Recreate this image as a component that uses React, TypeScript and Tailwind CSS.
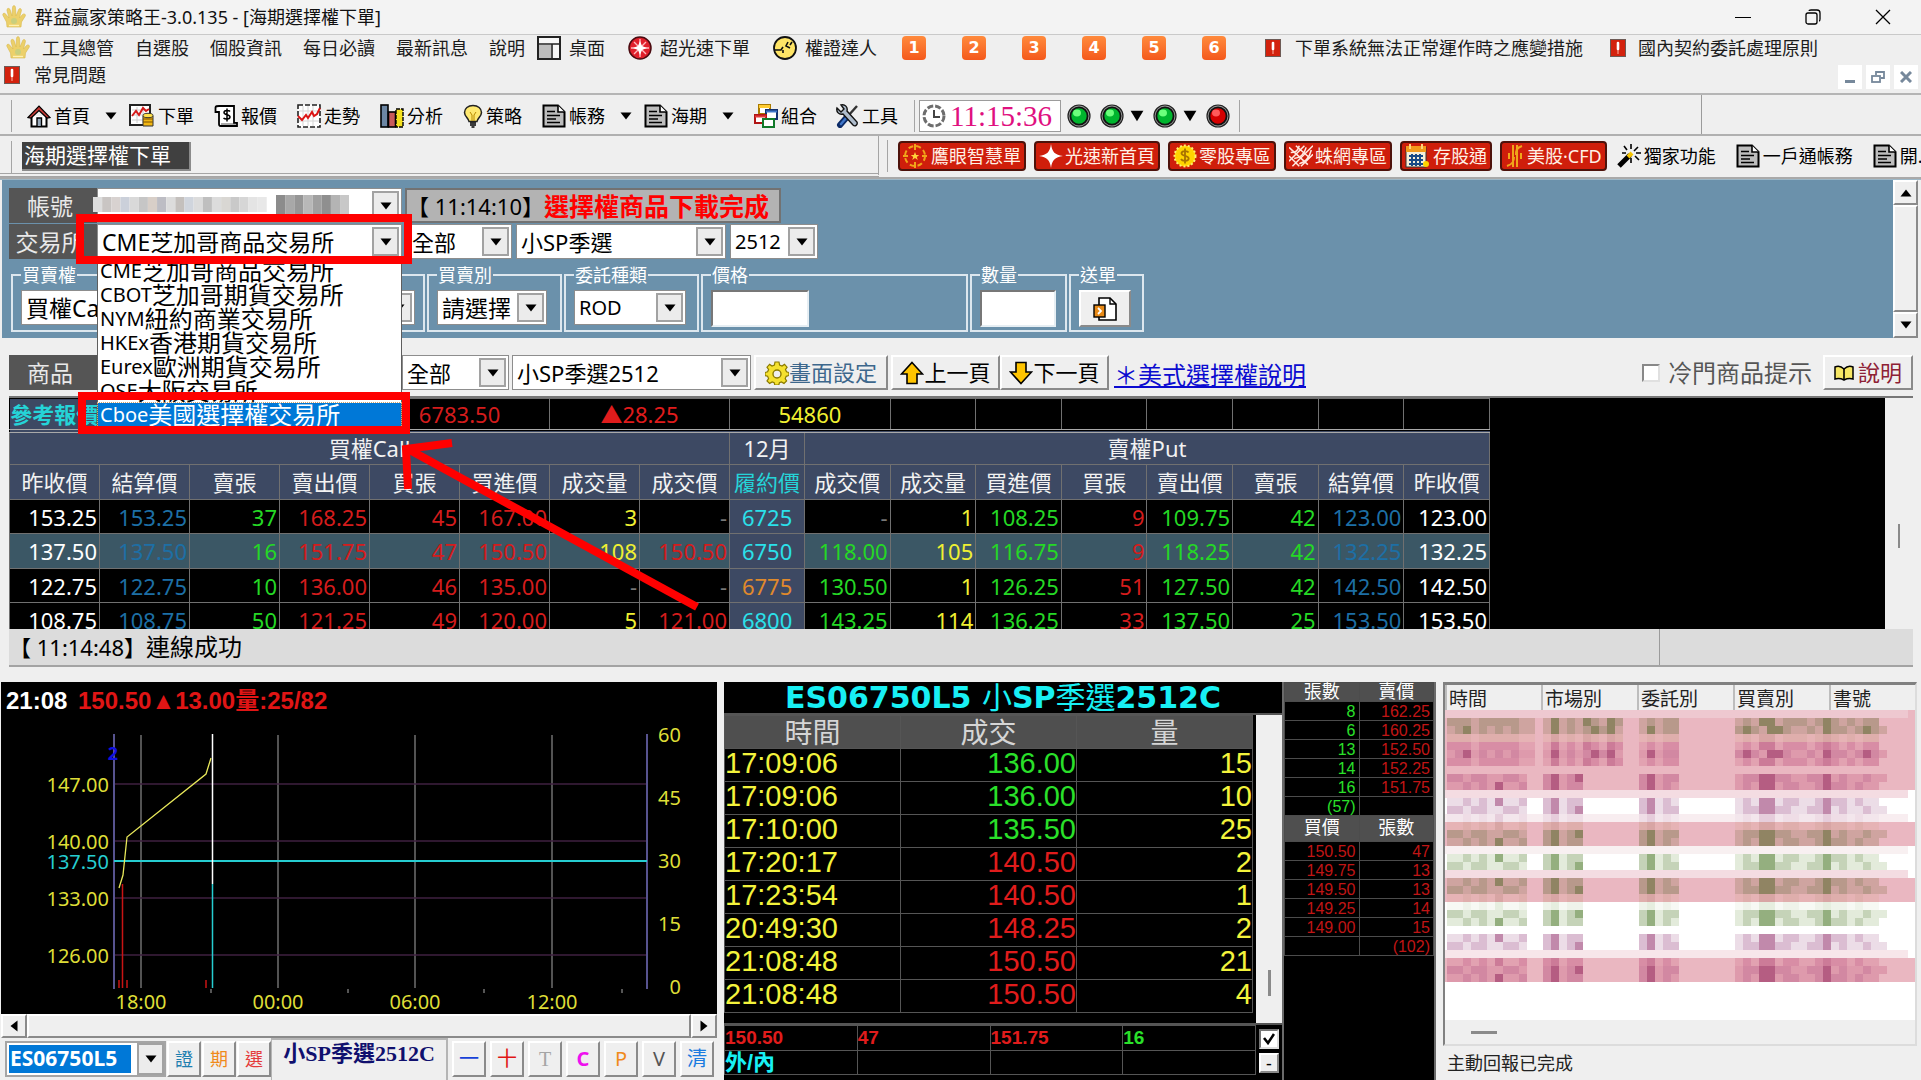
import { useState } from "react";
import type { ReactNode } from "react";

const exchanges = [
  { code: "CME", name: "芝加哥商品交易所" },
  { code: "CBOT", name: "芝加哥期貨交易所" },
  { code: "NYM", name: "紐約商業交易所" },
  { code: "HKEx", name: "香港期貨交易所" },
  { code: "Eurex", name: "歐洲期貨交易所" },
  { code: "OSE", name: "大阪交易所" },
  { code: "Cboe", name: "美國選擇權交易所" },
];

const callHeads = ["昨收價", "結算價", "賣張", "賣出價", "買張", "買進價", "成交量", "成交價"];
const putHeads = ["成交價", "成交量", "買進價", "買張", "賣出價", "賣張", "結算價", "昨收價"];

const callColors = [
  "text-white",
  "text-[#1d6fa5]",
  "text-[#25d825]",
  "text-[#d41c1c]",
  "text-[#d41c1c]",
  "text-[#d41c1c]",
  "text-[#f0f032]",
  "text-[#d41c1c]",
];
const putColors = [
  "text-[#25d825]",
  "text-[#f0f032]",
  "text-[#25d825]",
  "text-[#d41c1c]",
  "text-[#25d825]",
  "text-[#25d825]",
  "text-[#1d6fa5]",
  "text-white",
];

const quotes = [
  {
    strike: "6725",
    call: ["153.25", "153.25", "37", "168.25", "45", "167.00", "3", "-"],
    put: ["-", "1", "108.25", "9", "109.75", "42", "123.00", "123.00"],
  },
  {
    strike: "6750",
    active: true,
    call: ["137.50", "137.50", "16", "151.75", "47", "150.50", "108", "150.50"],
    put: ["118.00", "105", "116.75", "9", "118.25", "42", "132.25", "132.25"],
  },
  {
    strike: "6775",
    atm: true,
    call: ["122.75", "122.75", "10", "136.00", "46", "135.00", "-", "-"],
    put: ["130.50", "1", "126.25", "51", "127.50", "42", "142.50", "142.50"],
  },
  {
    strike: "6800",
    call: ["108.75", "108.75", "50", "121.25", "49", "120.00", "5", "121.00"],
    put: ["143.25", "114", "136.25", "33", "137.50", "25", "153.50", "153.50"],
  },
];

const trades = [
  { time: "17:09:06", price: "136.00", qty: "15" },
  { time: "17:09:06", price: "136.00", qty: "10" },
  { time: "17:10:00", price: "135.50", qty: "25" },
  { time: "17:20:17", price: "140.50", qty: "2", up: true },
  { time: "17:23:54", price: "140.50", qty: "1", up: true },
  { time: "20:49:30", price: "148.25", qty: "2", up: true },
  { time: "21:08:48", price: "150.50", qty: "21", up: true },
  { time: "21:08:48", price: "150.50", qty: "4", up: true },
];

const asks = [
  ["8", "162.25"],
  ["6", "160.25"],
  ["13", "152.50"],
  ["14", "152.25"],
  ["16", "151.75"],
  ["(57)", ""],
];
const bids = [
  ["150.50", "47"],
  ["149.75", "13"],
  ["149.50", "13"],
  ["149.25", "14"],
  ["149.00", "15"],
  ["", "(102)"],
];

/* Masked order rows: one character per 8px cell, 1-3 pick a shade of the band's palette */
const narrowA = "1121213112..23122.......23121.......1213312211232212110";
const narrowB = "2212211221..23123.......23122.......1223322112231211211";
const wideA = "22212222211.1312132132..12122.......1213312221232121220";
const wideB = "12312121211.1312123231..13122.......2321332112132212321";
const brown = ["#cfa4a0", "#b8998b", "#908463"];
const magenta = ["#de9aac", "#d288a2", "#b55d82"];
const mauve = ["#ecdde7", "#dbbdd2", "#c189ab"];
const green = ["#e3ebdb", "#c5d3b8", "#94af7f"];
const faint = ["#f7f9f4", "#eff3ea", "#e6eedf"];
const blush = ["#e6b3b5", "#dfaeac", "#d8a5a4"];

const mosaic: { row: number; cells: string; shades: string[] }[] = [
  { row: 1, cells: wideA, shades: brown },
  { row: 2, cells: wideB, shades: brown },
  { row: 3, cells: wideA, shades: blush },
  { row: 4, cells: wideA, shades: ["#e2a2b1", "#d88da5", "#cc7b98"] },
  { row: 5, cells: wideB, shades: magenta },
  { row: 6, cells: wideA, shades: ["#e2a2b1", "#d88da5", "#cc7b98"] },
  { row: 8, cells: narrowB, shades: magenta },
  { row: 9, cells: narrowA, shades: magenta },
  { row: 11, cells: narrowA, shades: mauve },
  { row: 12, cells: narrowB, shades: mauve },
  { row: 13, cells: narrowA, shades: ["#f3e6ec", "#efdde6", "#e6cddb"] },
  { row: 14, cells: narrowA, shades: blush },
  { row: 15, cells: narrowB, shades: brown },
  { row: 16, cells: narrowA, shades: brown },
  { row: 18, cells: narrowA, shades: green },
  { row: 19, cells: narrowB, shades: green },
  { row: 21, cells: narrowA, shades: brown },
  { row: 22, cells: narrowB, shades: brown },
  { row: 23, cells: narrowA, shades: blush },
  { row: 24, cells: narrowA, shades: faint },
  { row: 25, cells: narrowB, shades: green },
  { row: 26, cells: narrowA, shades: green },
  { row: 28, cells: narrowA, shades: mauve },
  { row: 29, cells: narrowB, shades: mauve },
  { row: 31, cells: narrowA, shades: ["#e2a2b1", "#d88da5", "#cc7b98"] },
  { row: 32, cells: narrowB, shades: magenta },
  { row: 33, cells: narrowA, shades: magenta },
];

const pinkBands = [
  [0, 10],
  [14, 3],
  [21, 3],
  [31, 3],
];
const paleBands: [number, string][] = [
  [0, "#eec8d0"],
  [10, "#f4dce2"],
  [13, "#f8edf0"],
  [17, "#f8f0f1"],
  [20, "#f4dce2"],
  [30, "#f7e6ea"],
];

const accountMask =
  "#ddd #c9c5c3 #d8d2d0 #cbd0da #d9d9d9 #c6c6c6 #d8cfc8 #bdbdc4 #dcdcdc #c4c0bd #d0d5dd #dcdcdc #bfbfbf #dcdcdc #d9d7d3 #c9c9c9 #d6d6d6 #e4e4e4 #e8e8e8 #fff #8c8c8c #a8a8a8 #969696 #b8b8b8 #a0a0a0 #8f8f8f #b4b4b4 #c8c8c8".split(" ");

/* ---------- icons ---------- */

function Crown() {
  return (
    <svg className="h-6 w-6 shrink-0" viewBox="0 0 24 24">
      <path
        d="M5 22L4.500 17L1 10.500C0 8 3 7.500 4 9.500L7 13L5 5.500C4.500 3 7.500 2.500 8.200 5L10 11L10.500 2.500C10.600 0 13.400 0 13.500 2.500L14 11L16.500 5C17.300 2.500 20 3.500 19.300 6L17.500 13L20.500 9.500C22 8 24.500 9.500 23 11.500L19.500 17L19 22Z"
        fill="#ecd06a"
        stroke="#d9b84d"
        strokeWidth="0.6"
      />
      <circle cx="12" cy="16" r="3" fill="#c9cf7d" />
      <path d="M7 20.500H17" stroke="#fff1b0" strokeWidth="1.400" />
    </svg>
  );
}

function Bang() {
  return (
    <svg className="h-[18px] w-4 shrink-0" viewBox="0 0 16 18">
      <rect x="0.5" y="0.5" width="15" height="17" fill="#d3220d" stroke="#6d5a55" />
      <path d="M8 4v6" stroke="#fff" strokeWidth="2.600" strokeLinecap="round" />
      <path d="M8 11v4" stroke="#ffb4a6" strokeWidth="1" />
    </svg>
  );
}

function NumberTile({ n }: { n: number }) {
  return (
    <button className="h-6 w-6 rounded-sm bg-linear-to-b from-[#ff8a3c] to-[#f4581b] text-center font-['DejaVu_Sans',sans-serif] text-base leading-6 font-bold text-white">
      {n}
    </button>
  );
}

function DocIcon() {
  return (
    <svg className="h-6 w-6 shrink-0" viewBox="0 0 24 24">
      <path d="M1.500 1.500H16L22.500 8V22.500H1.500Z" fill="#bdbdbd" stroke="#000" strokeWidth="2" />
      <path d="M16 1.500V8h6.500" fill="#fff" stroke="#000" strokeWidth="1.600" />
      <path d="M5 7.500h8M5 11.500h13M5 15h9M5 18.500h13" stroke="#000" strokeWidth="1.600" />
    </svg>
  );
}

function Led({ red }: { red?: boolean }) {
  return (
    <svg className="h-6 w-6 shrink-0" viewBox="0 0 24 24">
      <circle cx="12" cy="12" r="11" fill="#9a9a9a" stroke="#222" strokeWidth="1.200" />
      <circle cx="12" cy="12" r="8.600" fill={red ? "#d40000" : "#00b52e"} stroke="#111" strokeWidth="1.800" />
      <ellipse cx="10" cy="9" rx="4" ry="3.400" fill={red ? "#ff5a5a" : "#6cff7c"} />
    </svg>
  );
}

function Down({ big }: { big?: boolean }) {
  return (
    <svg className={big ? "h-3 w-3.5 shrink-0" : "h-2 w-3 shrink-0"} viewBox="0 0 12 8" preserveAspectRatio="none">
      <path d="M0.500 0.500H11.500L6 7.500Z" fill="#000" />
    </svg>
  );
}

function ToolItem({ icon, label, more }: { icon: ReactNode; label: string; more?: boolean }) {
  return (
    <button className="flex shrink-0 items-center gap-[3px] text-lg whitespace-nowrap text-black">
      {icon}
      {label}
      {more && (
        <span className="ml-3">
          <Down />
        </span>
      )}
    </button>
  );
}

const homeIcon = (
  <svg className="h-6 w-6" viewBox="0 0 24 24">
    <path d="M4.500 12v10.500h15V12" fill="#fff" stroke="#000" strokeWidth="2" />
    <path d="M10 22v-8h4.500v8" fill="#9ab" stroke="#000" strokeWidth="1.400" />
    <path d="M1 13.500 L12 2 L23 13.500 L20 14 L12 6.500 L4 14Z" fill="#c63a35" stroke="#000" strokeWidth="1.200" />
  </svg>
);
const orderIcon = (
  <svg className="h-6 w-[26px]" viewBox="0 0 26 24">
    <rect x="1" y="1" width="20" height="20" fill="#fff" stroke="#222" strokeWidth="2" />
    <path d="M3 6h16M3 11h16M3 16h16M8 3v16M14 3v16" stroke="#ccc" />
    <path d="M3 12l4-5 3 4 4-7 3 3 3-2" fill="none" stroke="#d51b1b" strokeWidth="2" />
    <path d="M14 12h10v10h-10z" fill="#f2b714" stroke="#333" />
    <path d="M14 15h10M14 18h10" stroke="#7a5200" strokeWidth="1.200" />
    <ellipse cx="19" cy="11.500" rx="5" ry="2.200" fill="#ffe14a" stroke="#333" />
  </svg>
);
const quoteIcon = (
  <svg className="h-6 w-6" viewBox="0 0 24 24">
    <path d="M5 2h15v17h3v3H7c-2 0-2-1-2-3V8H1.500V3.500C1.500 2 3 2 5 2z" fill="#fff" stroke="#000" strokeWidth="1.800" />
    <path d="M16 7.500c-1-1.500-6-1.500-6 1 0 3 6 1.500 6 4.500 0 2.500-5 2.500-6.500 1M13 4.500v13" fill="none" stroke="#000" strokeWidth="1.500" />
    <path d="M7 20h15" stroke="#555" />
  </svg>
);
const trendIcon = (
  <svg className="h-6 w-6" viewBox="0 0 24 24">
    <rect x="1" y="1" width="22" height="22" fill="#fff" stroke="#222" strokeWidth="1.600" strokeDasharray="5 2" />
    <path d="M6 2v20M11 2v20M16 2v20M2 7h20M2 17h20" stroke="#d5d5d5" />
    <path d="M1 12l4 4 4-5 2 3 4-6 2 4 3-2 3-6" fill="none" stroke="#dc1414" strokeWidth="2" />
  </svg>
);
const analysisIcon = (
  <svg className="h-6 w-6" viewBox="0 0 24 24">
    <rect x="1" y="1" width="7" height="22" fill="#6c86a3" stroke="#000" strokeWidth="1.600" />
    <rect x="8.500" y="8" width="7" height="15" fill="#c85b5b" stroke="#000" strokeWidth="1.600" />
    <rect x="16" y="5" width="7" height="18" fill="#f4e01f" stroke="#000" strokeWidth="1.400" strokeDasharray="4 1" />
  </svg>
);
const bulbIcon = (
  <svg className="h-6 w-5" viewBox="0 0 20 24">
    <path d="M10 1.500c-5 0-8.500 3-8.500 7 0 4 4 5.500 4.500 9h8c.5-3.500 4.500-5 4.500-9 0-4-3.500-7-8.500-7z" fill="#ffe970" stroke="#222" strokeWidth="1.500" />
    <path d="M7 8l2 3v6M13 8l-2 3v6" fill="none" stroke="#b88a00" />
    <path d="M7 19h6M7 21h6M8.500 23h3" stroke="#000" strokeWidth="1.600" />
  </svg>
);
const comboIcon = (
  <svg className="h-6 w-6" viewBox="0 0 24 24">
    <rect x="5" y="1" width="11" height="9" fill="#fff" stroke="#a97a00" strokeWidth="2" />
    <path d="M5 2.500h11" stroke="#ffcc33" strokeWidth="3" />
    <rect x="12" y="6" width="11" height="9" fill="#fff" stroke="#12306f" strokeWidth="2" />
    <path d="M12 7.500h11" stroke="#3f76c9" strokeWidth="2" />
    <rect x="1" y="11" width="11" height="8" fill="#fff" stroke="#b01515" strokeWidth="2" />
    <path d="M1 12.500h11" stroke="#e53b3b" strokeWidth="2" />
    <rect x="9" y="15" width="11" height="8" fill="#fff" stroke="#127a2a" strokeWidth="2" />
  </svg>
);
const toolsIcon = (
  <svg className="h-6 w-6" viewBox="0 0 24 24">
    <path d="M22 2L13 12" stroke="#333" strokeWidth="2.400" />
    <path d="M12 13L5 21" stroke="#0b2a66" strokeWidth="6" strokeLinecap="round" />
    <path d="M11.500 13.500L6 20" stroke="#3f76c9" strokeWidth="2.500" strokeLinecap="round" />
    <path d="M2 4l4 4 3-3-3-4c4-1 7 2 6 6l10 11c1 3-2 5-4 3L8 10C4 11 1 8 2 4z" fill="#aebccb" stroke="#111" strokeWidth="1.400" />
  </svg>
);
const wandIcon = (
  <svg className="h-6 w-6" viewBox="0 0 24 24">
    <path d="M2 22L13 11" stroke="#000" strokeWidth="5" />
    <path d="M11 13l4-4" stroke="#f5c400" strokeWidth="4" />
    <path d="M14 0v5M7 2l3 4M21 3l-4 4M24 9h-5M18 12l4 4M14 14v5M5 9h4" stroke="#000" strokeWidth="1.600" />
  </svg>
);

const promos = [
  {
    label: "鷹眼智慧單",
    icon: (
      <svg className="mr-0.5 h-6 w-6" viewBox="0 0 24 24" fill="none" stroke="#f0a51a" strokeWidth="2">
        <circle cx="12" cy="12" r="10" strokeDasharray="5 3" />
        <path d="M12 0v6M12 18v6M0 12h5M19 12h5" />
        <path d="M12 8l1.200 3h3l-2.400 2 1 3-2.800-2-2.800 2 1-3-2.400-2h3z" fill="#ffd23a" stroke="none" />
      </svg>
    ),
  },
  {
    label: "光速新首頁",
    icon: (
      <svg className="h-6 w-6" viewBox="0 0 24 24">
        <path d="M12 0c1 8 4 11 12 12-8 1-11 4-12 12C11 16 8 13 0 12 8 11 11 8 12 0z" fill="#fff" />
      </svg>
    ),
  },
  {
    label: "零股專區",
    icon: (
      <svg className="h-6 w-6" viewBox="0 0 24 24">
        <circle cx="12" cy="12" r="10.500" fill="#ffd400" stroke="#ffee70" strokeDasharray="2 2" strokeWidth="2" />
        <path d="M15.500 8.500c-1-2-7-2-7 .8 0 3.200 7.200 2 7.200 5.200 0 3-6.500 3-7.700.5M12 4.500v15" fill="none" stroke="#a87200" strokeWidth="1.800" />
      </svg>
    ),
  },
  {
    label: "蛛網專區",
    icon: (
      <svg className="h-6 w-6" viewBox="0 0 28 24" fill="none" stroke="#ffe9e0" strokeWidth="1.800">
        <path d="M0 2l22 20M0 12l12 12M8 0l16 14M28 0L4 24M18 0L0 18M28 10L14 24" />
        <path d="M2 8c6 0 8-2 10-8M6 15c8-1 12-5 14-13M12 21c8-2 12-8 14-16" />
      </svg>
    ),
  },
  {
    label: "存股通",
    icon: (
      <svg className="mr-0.5 h-6 w-6" viewBox="0 0 24 24">
        <rect x="1" y="3" width="20" height="20" fill="#f7efd8" stroke="#333" />
        <rect x="1" y="2" width="20" height="6" fill="#f39a1c" />
        <path d="M5 0v5M17 0v5" stroke="#ffd27a" strokeWidth="2" />
        <path d="M4 12h14M4 16h14M4 20h14M7 10v12M11 10v12M15 10v12" stroke="#1a4b86" strokeWidth="2" />
        <circle cx="21" cy="20" r="3" fill="#ffd400" />
      </svg>
    ),
  },
  {
    label: "美股·CFD",
    icon: (
      <svg className="h-6 w-5" viewBox="0 0 20 24" fill="none" stroke="#f0a51a" strokeWidth="2">
        <path d="M8 1v22M12 1v22M17 2c-6 2-6 5-6 9M9 13c0 4-1 7-7 9M4 9v6M16 9v6" />
      </svg>
    ),
  },
];

/* ---------- form parts ---------- */

type ComboProps = {
  label: string;
  value: string;
  options?: string[];
  width: string;
  size?: string;
  children?: ReactNode;
};

function Combo({ label, value, options, width, size = "text-[22px]", children }: ComboProps) {
  return (
    <div className={`relative h-[35px] shrink-0 border border-[#8d8d8d] bg-white ${width}`}>
      <select
        aria-label={label}
        defaultValue={value}
        className={`h-full w-full appearance-none bg-transparent pl-1 leading-8 text-black outline-none ${size}`}
      >
        {(options ?? [value]).map((o) => (
          <option key={o}>{o}</option>
        ))}
      </select>
      <span className="pointer-events-none absolute inset-y-0.5 right-0.5 flex w-[27px] items-center justify-center border-2 border-[#a2a2a2] bg-[#ececec]">
        <Down />
      </span>
      {children}
    </div>
  );
}

function Field({ legend, width, children }: { legend: string; width: string; children: ReactNode }) {
  return (
    <fieldset className={`h-[66px] shrink-0 border-2 border-[#dde7ee] px-2 ${width}`}>
      <legend className="px-px text-lg leading-[18px] text-white">{legend}</legend>
      <div className="pt-1.5">{children}</div>
    </fieldset>
  );
}

function SideLabel({ children }: { children: ReactNode }) {
  return (
    <div className="flex h-[35px] w-[88px] shrink-0 items-center justify-center bg-[#555] pr-1.5 text-[23px] leading-8 text-[#e9e9e9]">
      {children}
    </div>
  );
}

const raised = "border-2 border-t-white border-l-white border-r-[#8a8a8a] border-b-[#8a8a8a] bg-[#efefef]";

function RaisedButton({ className = "", children, label }: { className?: string; children: ReactNode; label?: string }) {
  return (
    <button aria-label={label} className={`flex shrink-0 items-center justify-center whitespace-nowrap ${raised} ${className}`}>
      {children}
    </button>
  );
}

/* ---------- sections ---------- */

function TitleBar() {
  return (
    <header className="flex h-[35px] items-center border-b border-[#c9c9c9] bg-[#f3f3f3] pl-0.5">
      <Crown />
      <h1 className="ml-[9px] text-lg text-[#111]">群益贏家策略王-3.0.135 - [海期選擇權下單]</h1>
      <div className="ml-auto flex gap-[54px] pr-[30px]">
        <button aria-label="最小化" className="flex h-4 w-4 items-center">
          <span className="h-px w-full bg-black" />
        </button>
        <button aria-label="還原">
          <svg className="h-4 w-4" viewBox="0 0 16 16" fill="none" stroke="#000" strokeWidth="1.300">
            <rect x="1" y="4" width="11" height="11" rx="2" />
            <path d="M4 2c0-1 1-1 2-1h6c2 0 3 1 3 3v6c0 1 0 2-1 2" />
          </svg>
        </button>
        <button aria-label="關閉">
          <svg className="h-4 w-4" viewBox="0 0 16 16" stroke="#000" strokeWidth="1.300">
            <path d="M1 1l14 14M15 1L1 15" />
          </svg>
        </button>
      </div>
    </header>
  );
}

function MenuBar() {
  return (
    <nav className="border-b-2 border-[#b5b5b5] bg-[#efefef] text-lg leading-6 text-[#1c1c1c]">
      <div className="flex h-[26px] items-center gap-[21px] overflow-hidden pl-1.5 whitespace-nowrap">
        <a href="#tools" className="flex items-center gap-3">
          <Crown />
          工具總管
        </a>
        <a href="#watch">自選股</a>
        <a href="#info">個股資訊</a>
        <a href="#daily">每日必讀</a>
        <a href="#news">最新訊息</a>
        <div className="flex items-center gap-3">
          <a href="#help">說明</a>
          <a href="#desktop" className="flex items-center gap-2">
            <svg className="h-6 w-6" viewBox="0 0 24 24">
              <rect x="1" y="1" width="22" height="22" fill="#f6f6f6" stroke="#222" strokeWidth="2" />
              <path d="M1 8h22M15 8v15" stroke="#222" strokeWidth="1.600" />
              <path d="M2 9h12v13H2z" fill="#bdbdbd" />
            </svg>
            桌面
          </a>
        </div>
        <a href="#fast" className="ml-0.5 flex items-center gap-2">
          <svg className="h-6 w-6" viewBox="0 0 24 24">
            <circle cx="12" cy="12" r="11" fill="#e0202c" stroke="#4a0a10" strokeWidth="1.500" />
            <path d="M12 3v18M3 12h18M6 6l12 12M18 6L6 18" stroke="#ffb9bd" strokeWidth="1.400" />
            <path d="M12 5l2 5 5 2-5 2-2 5-2-5-5-2 5-2z" fill="#fff" />
          </svg>
          超光速下單
        </a>
        <a href="#warrant" className="ml-0.5 flex items-center gap-2">
          <svg className="h-6 w-6" viewBox="0 0 24 24">
            <circle cx="12" cy="12" r="11" fill="#ffe566" stroke="#111" strokeWidth="1.800" />
            <path d="M1 14h7l2-3M15 6l-2 4 4 2M19 6l-2 3M10 14v3" fill="none" stroke="#111" strokeWidth="1.600" />
          </svg>
          權證達人
        </a>
        <div className="ml-1 flex gap-9 pr-[18px]">
          {[1, 2, 3, 4, 5, 6].map((n) => (
            <NumberTile key={n} n={n} />
          ))}
        </div>
        <a href="#emergency" className="flex items-center gap-3.5">
          <Bang />
          下單系統無法正常運作時之應變措施
        </a>
        <a href="#domestic" className="ml-[6px] flex items-center gap-3">
          <Bang />
          國內契約委託處理原則
        </a>
      </div>
      <div className="flex h-8 items-center pl-1">
        <a href="#faq" className="flex items-center gap-3.5 self-start pt-0.5">
          <Bang />
          常見問題
        </a>
        <div className="ml-auto flex gap-1 pr-[3px]">
          <button aria-label="子視窗最小化" className="flex h-6 w-6 items-center justify-center bg-white">
            <span className="mt-2 h-[3px] w-2.5 bg-[#76889b]" />
          </button>
          <button aria-label="子視窗還原" className="flex h-6 w-6 items-center justify-center bg-white">
            <svg className="h-3.5 w-3.5" viewBox="0 0 14 14" fill="none" stroke="#76889b" strokeWidth="1.800">
              <path d="M5 5V2h8v6h-3" />
              <rect x="1" y="6" width="8" height="6" />
            </svg>
          </button>
          <button aria-label="子視窗關閉" className="flex h-6 w-6 items-center justify-center bg-white">
            <svg className="h-3 w-3" viewBox="0 0 12 12" stroke="#76889b" strokeWidth="3">
              <path d="M1 1l10 10M11 1L1 11" />
            </svg>
          </button>
        </div>
      </div>
    </nav>
  );
}

function Grip() {
  return <span className="h-8 w-px shrink-0 bg-[#a5a5a5]" />;
}

function Toolbars() {
  return (
    <div className="bg-[#efefef]">
      <div className="flex h-[41px] border-b-2 border-[#b0b0b0]">
        <div className="flex w-[1702px] items-center border-r border-[#9b9b9b] pt-0.5 pl-[11px]">
          <Grip />
          <div className="ml-[15px] flex gap-3">
            <ToolItem icon={homeIcon} label="首頁" more />
            <div className="flex gap-5">
              <ToolItem icon={orderIcon} label="下單" />
              <ToolItem icon={quoteIcon} label="報價" />
              <ToolItem icon={trendIcon} label="走勢" />
              <ToolItem icon={analysisIcon} label="分析" />
              <ToolItem icon={bulbIcon} label="策略" />
              <ToolItem icon={<DocIcon />} label="帳務" more />
            </div>
            <ToolItem icon={<DocIcon />} label="海期" more />
          </div>
          <span className="mr-3 ml-2">
            <Grip />
          </span>
          <div className="flex gap-[18px]">
            <ToolItem icon={comboIcon} label="組合" />
            <ToolItem icon={toolsIcon} label="工具" />
          </div>
          <span className="mr-1 ml-4 flex">
            <Grip />
          </span>
          <div className="flex h-8 items-center gap-1 border border-[#9c9c9c] bg-white px-0.5">
            <svg className="h-6 w-6" viewBox="0 0 24 24" fill="none">
              <circle cx="12" cy="12" r="10" stroke="#6d6d6d" strokeWidth="3" strokeDasharray="6 2" />
              <path d="M12 6v7h6" stroke="#444" strokeWidth="2" />
            </svg>
            <time className="w-[108px] font-['Liberation_Serif',serif] text-[29px] leading-7 text-[#e0107f]">11:15:36</time>
          </div>
          <div className="ml-1.5 flex items-center gap-[9px]">
            <Led />
            <span className="flex items-center gap-1.5">
              <Led />
              <Down big />
            </span>
            <span className="flex items-center gap-1.5">
              <Led />
              <Down big />
            </span>
            <Led red />
            <Grip />
          </div>
        </div>
      </div>
      <div className="flex h-[43px] border-b-2 border-[#a9a9a9]">
        <div className="flex w-[879px] shrink-0 items-center border-r border-b-4 border-double border-[#a5a5a5] pt-1 pl-[11px]">
          <Grip />
          <button className="ml-2.5 h-[29px] w-[169px] border-r-2 border-b-2 border-[#8b8b8b] bg-[#404040] pl-0.5 text-left text-[21px] leading-[27px] whitespace-nowrap text-white">
            海期選擇權下單
          </button>
        </div>
        <div className="flex min-w-0 flex-1 items-center overflow-hidden pb-0.5 pl-2">
          <Grip />
          <div className="ml-2.5 flex shrink-0 gap-2">
            {promos.map((p) => (
              <button
                key={p.label}
                className="flex h-[30px] items-center gap-0.5 rounded-sm border-2 border-[#4d120b] bg-[#cf1e0b] px-[3px] text-lg whitespace-nowrap text-[#fff1e6]"
              >
                {p.icon}
                {p.label}
              </button>
            ))}
          </div>
          <div className="ml-2.5 flex shrink-0 gap-5">
            <ToolItem icon={wandIcon} label="獨家功能" />
            <ToolItem icon={<DocIcon />} label="一戶通帳務" />
            <ToolItem icon={<DocIcon />} label="開." />
          </div>
        </div>
      </div>
    </div>
  );
}

function ExchangeMenu() {
  return (
    <>
      <ul role="listbox" aria-label="交易所清單" className="absolute top-full -left-px z-20 w-[305px] border border-[#5e5e5e] bg-white">
        {exchanges.map((e) => {
          const picked = e.code === "Cboe";
          return (
            <li
              key={e.code}
              role="option"
              aria-selected={picked}
              className={`flex h-6 items-center pl-0.5 text-[24px] leading-6 whitespace-nowrap ${
                picked ? "relative bg-[#0078d7] text-white outline outline-dotted outline-[#d9a56a]" : "text-black"
              }`}
            >
              <span className="text-[20px]">{e.code}</span>
              {e.name}
              {picked && <span className="absolute -top-[11px] -left-5 h-[42px] w-[332px] border-8 border-[#f00]" />}
            </li>
          );
        })}
      </ul>
      <span className="absolute -top-[11px] -left-[22px] z-30 h-[50px] w-[336px] border-8 border-[#f00]" />
      <svg className="pointer-events-none absolute top-[210px] left-[294px] z-30 h-[180px] w-[320px]" viewBox="0 0 320 180" fill="none" stroke="#f00" strokeWidth="8">
        <path d="M14 13L305 172" />
        <path d="M60 8L14 14L16 54" />
      </svg>
    </>
  );
}

function OrderPanel() {
  return (
    <form className="flex border-t border-[#9db8c8] pr-[3px] pl-0.5">
      <div className="min-w-0 flex-1 bg-[#6b91ab] pt-2 pb-1.5 pl-[7px]">
        <div className="flex">
          <SideLabel>帳號</SideLabel>
          <div className="relative h-[35px] w-[305px] shrink-0">
            <Combo label="帳號" value="" width="w-full" />
            <svg className="absolute top-[7px] -left-1 h-5 w-64" viewBox="0 0 256 20" preserveAspectRatio="none">
              {accountMask.map((c, i) => (
                <rect key={i} fill={c} x={i * 9.15} y={i > 19 ? 0 : 2} width="9.15" height={i > 19 ? 20 : 15} />
              ))}
            </svg>
          </div>
          <output className="ml-[3px] flex h-[35px] w-[376px] shrink-0 items-center border-2 border-[#727272] bg-[#b3b3b3] text-[25px] leading-8 whitespace-nowrap">
            <span className="text-[22px] text-black">【 11:14:10】</span>
            <span className="font-bold text-[#f00]">選擇權商品下載完成</span>
          </output>
        </div>
        <div className="mt-px flex">
          <SideLabel>交易所</SideLabel>
          <Combo
            label="交易所"
            value="CME芝加哥商品交易所"
            options={exchanges.map((e) => e.code + e.name)}
            width="w-[305px]"
            size="text-[23px]"
          >
            <ExchangeMenu />
          </Combo>
          <div className="ml-[5px] flex gap-1">
            <Combo label="類別" value="全部" width="w-[105px]" />
            <Combo label="商品" value="小SP季選" width="w-[210px]" />
            <Combo label="月份" value="2512" width="w-[88px]" size="text-[20px]" />
          </div>
        </div>
        <div className="mt-[7px] flex gap-0.5 pl-0.5">
          <Field legend="買賣權" width="w-[414px]">
            <Combo label="買賣權" value="買權Call" width="w-full" size="text-[23px]" />
          </Field>
          <Field legend="買賣別" width="w-[135px]">
            <Combo label="買賣別" value="請選擇" width="w-[110px]" size="text-[23px]" />
          </Field>
          <Field legend="委託種類" width="w-[135px]">
            <Combo label="委託種類" value="ROD" width="w-[112px]" size="text-[20px]" />
          </Field>
          <Field legend="價格" width="w-[267px]">
            <input aria-label="價格" className="block h-[37px] w-[98px] border-2 border-t-[#777] border-l-[#777] border-r-[#e6eef3] border-b-[#e6eef3] bg-white px-1" />
          </Field>
          <Field legend="數量" width="w-[97px]">
            <input aria-label="數量" className="block h-[37px] w-[76px] border-2 border-t-[#777] border-l-[#777] border-r-[#e6eef3] border-b-[#e6eef3] bg-white px-1" />
          </Field>
          <Field legend="送單" width="w-[75px]">
            <RaisedButton label="送單" className="h-[37px] w-[52px]">
              <svg className="h-6 w-6" viewBox="0 0 24 24">
                <path d="M6 1h11l6 6v16H6z" fill="#fff" stroke="#000" strokeWidth="1.600" />
                <path d="M17 1v6h6" fill="none" stroke="#000" strokeWidth="1.400" />
                <rect x="1" y="8" width="11" height="12" fill="#e88a17" stroke="#000" strokeWidth="1.400" />
                <path d="M5 11l3 3-3 3" fill="none" stroke="#fff" strokeWidth="1.800" />
              </svg>
            </RaisedButton>
          </Field>
        </div>
      </div>
      <div className="flex w-[25px] flex-col bg-[#efefef]">
        <RaisedButton label="向上捲動" className="h-[25px]">
          <svg className="h-2 w-3" viewBox="0 0 12 8">
            <path d="M0.500 7.500h11L6 .5z" />
          </svg>
        </RaisedButton>
        <div className={`flex-1 ${raised}`} />
        <RaisedButton label="向下捲動" className="h-[26px]">
          <Down />
        </RaisedButton>
      </div>
    </form>
  );
}

function ProductBar() {
  return (
    <div className="flex items-center gap-[3px] bg-[#efefef] pt-[17px] pr-2 pb-1.5 pl-[9px]">
      <div className="flex">
        <SideLabel>商品</SideLabel>
        <Combo label="交易所篩選" value="CME芝加哥商品交易所" width="w-[305px]" />
        <Combo label="類別篩選" value="全部" width="w-[107px]" />
      </div>
      <Combo label="商品篩選" value="小SP季選2512" width="w-[239px]" />
      <RaisedButton className="h-[35px] w-[134px] text-[22px] text-[#3d678c]">
        <svg className="h-6 w-6" viewBox="0 0 24 24">
          <path
            d="M10 1h4l.6 3 2.400 1 2.500-1.600 2.600 2.800L20.500 8.500l1 2.300L24 11.500v3l-2.800.8-1 2.300 1.400 2.400-2.600 2.400-2.600-1.400-2 .8-.6 2.200h-4l-.6-2.200-2-.8-2.600 1.400L2 20l1.600-2.400-1-2.300L0 14.500v-3l2.600-.7 1-2.300L2 6.200l2.600-2.800L7 5l2.400-1z"
            fill="#f5e12f"
            stroke="#8b7b00"
            strokeWidth="1.200"
          />
          <circle cx="12" cy="13" r="4" fill="#efefef" stroke="#8b7b00" strokeWidth="1.400" />
        </svg>
        畫面設定
      </RaisedButton>
      <div className="flex">
        <RaisedButton className="h-[35px] w-[109px] text-[22px] text-black">
          <svg className="h-6 w-6" viewBox="0 0 24 24">
            <path d="M12 1.500L22.500 13H17v9.500H7V13H1.500z" fill="#ffc400" stroke="#000" strokeWidth="1.600" />
          </svg>
          上一頁
        </RaisedButton>
        <RaisedButton className="h-[35px] w-[109px] text-[22px] text-black">
          <svg className="h-6 w-6" viewBox="0 0 24 24">
            <path d="M12 22.500L22.500 11H17V1.500H7V11H1.500z" fill="#ffc400" stroke="#000" strokeWidth="1.600" />
          </svg>
          下一頁
        </RaisedButton>
      </div>
      <a href="#american" className="ml-0.5 pt-1 text-[24px] leading-7 whitespace-nowrap text-[#0b0bd0] underline">
        ＊美式選擇權說明
      </a>
      <label className="ml-auto flex items-center gap-2 text-[24px] leading-8 whitespace-nowrap text-[#555]">
        <input type="checkbox" className="h-[18px] w-[18px] appearance-none border-2 border-t-[#888] border-l-[#888] border-r-[#e0e0e0] border-b-[#e0e0e0] bg-white" />
        冷門商品提示
      </label>
      <RaisedButton className="ml-2 h-[35px] w-[90px] gap-1 text-[22px] text-[#8e2135]">
        <svg className="h-4 w-5" viewBox="0 0 20 16">
          <path d="M1 2c4-2 7 0 9 2 2-2 5-4 9-2v12c-4-1-7 0-9 1-2-1-5-2-9-1z" fill="#f7e765" stroke="#000" strokeWidth="1.500" />
          <path d="M10 4v11" stroke="#000" strokeWidth="1.600" />
        </svg>
        說明
      </RaisedButton>
    </div>
  );
}

const cell = "border border-[#707070] px-0.5 font-normal";

function QuoteGrid() {
  return (
    <section className="pr-2 pl-[9px]">
      <div className="flex h-[233px] overflow-hidden border-t-2 border-[#777] bg-black">
        <div className="min-w-0 flex-1 overflow-hidden">
          <table className="w-[1481px] table-fixed border-collapse text-[22px] leading-7 whitespace-nowrap">
            <colgroup>
              {callHeads.map((h) => (
                <col key={h} className="w-[90px]" />
              ))}
              <col className="w-[75px]" />
              {putHeads.map((h) => (
                <col key={h} />
              ))}
            </colgroup>
            <thead className="text-[#f2f2f2]">
              <tr className="h-8 border-b-4 border-double border-[#a9a9a9] text-center">
                <td className="bg-[#3d4963] font-bold text-[#25d4d8]">參考報價</td>
                <td colSpan={3} className={cell} />
                <td colSpan={2} className={`${cell} text-[#d41c1c]`}>
                  6783.50
                </td>
                <td colSpan={2} className={`${cell} text-[#e01c1c]`}>
                  ▲28.25
                </td>
                <td colSpan={2} className={`${cell} text-[#f0f032]`}>
                  54860
                </td>
                {putHeads.slice(1).map((h) => (
                  <td key={h} className={cell} />
                ))}
              </tr>
              <tr className="h-[34px] bg-[#3d4963]">
                <th colSpan={8} className={cell}>
                  買權Call
                </th>
                <th className={cell}>12月</th>
                <th colSpan={8} className={cell}>
                  賣權Put
                </th>
              </tr>
              <tr className="h-[35px] bg-[#3d4963]">
                {callHeads.map((h) => (
                  <th key={h} className={cell}>
                    {h}
                  </th>
                ))}
                <th className={`${cell} text-[#25d4d8]`}>履約價</th>
                {putHeads.map((h) => (
                  <th key={h} className={cell}>
                    {h}
                  </th>
                ))}
              </tr>
            </thead>
            <tbody>
              {quotes.map((q) => (
                <tr key={q.strike} className={`text-right ${q.active ? "h-[35px] bg-[#3b5765]" : "h-[34px] bg-black"}`}>
                  {q.call.map((v, i) => (
                    <td key={i} className={`${cell} ${v === "-" ? "text-[#777]" : callColors[i]}`}>
                      {v}
                    </td>
                  ))}
                  <td className={`${cell} bg-[#3d4963] text-center ${q.atm ? "text-[#e08a2c]" : "text-[#2be0ea]"}`}>{q.strike}</td>
                  {q.put.map((v, i) => (
                    <td key={i} className={`${cell} ${v === "-" ? "text-[#777]" : putColors[i]}`}>
                      {v}
                    </td>
                  ))}
                </tr>
              ))}
            </tbody>
          </table>
        </div>
        <div className="flex w-7 justify-center bg-[#efefef] pt-[126px]">
          <span className="h-6 w-0.5 bg-[#8a8a8a]" />
        </div>
      </div>
      <div className="flex h-[38px] items-center border-b-2 border-[#a3a3a3] bg-[#dcdcdc] text-[24px] leading-8 text-black">
        <div className="flex h-full flex-1 items-center border-r border-[#9b9b9b]">
          <span className="text-[22px]">【 11:14:48】</span>
          連線成功
        </div>
        <div className="w-[253px]" />
      </div>
    </section>
  );
}

function Chart() {
  const left = [
    { y: 102, t: "147.00" },
    { y: 159, t: "140.00" },
    { y: 216, t: "133.00" },
    { y: 273, t: "126.00" },
  ];
  const right = ["60", "45", "30", "15", "0"];
  const hours = [
    { x: 140, t: "18:00" },
    { x: 277, t: "00:00" },
    { x: 414, t: "06:00" },
    { x: 551, t: "12:00" },
  ];
  return (
    <svg className="block h-[332px] w-full bg-black font-['Noto_Sans','Noto_Sans_CJK_TC',sans-serif]" viewBox="0 0 716 332" preserveAspectRatio="none">
      <g className="font-['Liberation_Sans','Noto_Sans_CJK_TC',sans-serif] text-[24px] font-bold">
        <text x="5" y="27" fill="#fff">
          21:08
        </text>
        <text x="77" y="27" fill="#e01515">
          150.50▲13.00量:25/82
        </text>
      </g>
      {hours.map((h) => (
        <path key={h.t} d={`M${h.x} 53V306`} stroke="#6f6f6f" strokeWidth="1.500" />
      ))}
      {left.map((l) => (
        <path key={l.t} d={`M113 ${l.y}H646`} stroke="#3f2140" strokeWidth="1.500" />
      ))}
      <path d="M113 52V307M646 52V307" stroke="#57538f" strokeWidth="2" />
      <path d="M113 179H646" stroke="#26cdd0" strokeWidth="2" />
      <path d="M211.500 52V202" stroke="#fff" strokeWidth="1.500" />
      <path d="M211.500 202V306" stroke="#26cdd0" strokeWidth="1.500" />
      <path d="M121.500 202V306M118 298V306M126 298V306M205 298V306" stroke="#c81414" strokeWidth="1.500" />
      <polyline points="118,206 122,193 126,155 205,92 210,76" fill="none" stroke="#e8e85a" strokeWidth="1.300" />
      <path d="M210 307v4M347 307v4M483 307v4M621 307v4" stroke="#aaa" />
      <text x="112" y="78" textAnchor="middle" fill="#1010e0" fontSize="18" fontWeight="bold">
        2
      </text>
      <g fontSize="20" fill="#dede37">
        {left.map((l) => (
          <text key={l.t} x="108" y={l.y + 8} textAnchor="end">
            {l.t}
          </text>
        ))}
        <text x="108" y="187" textAnchor="end" fill="#26cdd0">
          137.50
        </text>
        {right.map((t, i) => (
          <text key={t} x="680" y={60 + i * 63} textAnchor="end">
            {t}
          </text>
        ))}
        {hours.map((h) => (
          <text key={h.t} x={h.x} y="327" textAnchor="middle">
            {h.t}
          </text>
        ))}
      </g>
    </svg>
  );
}

const drawTools = [
  { t: "一", c: "text-[#1742d8]" },
  { t: "十", c: "text-[#e01515]" },
  { t: "T", c: "text-[#a5a5a5] font-['Liberation_Serif',serif]" },
  { t: "C", c: "text-[#ee11ee] font-bold" },
  { t: "P", c: "text-[#f08a1c]" },
  { t: "V", c: "text-[#555]" },
  { t: "清", c: "text-[#1a7be0]" },
];

function ChartPane() {
  return (
    <section className="flex min-w-0 flex-col">
      <Chart />
      <div className="flex h-6">
        <RaisedButton label="向左" className="w-[26px]">
          <svg className="h-3 w-2" viewBox="0 0 8 12">
            <path d="M7.500 .5v11L.5 6z" />
          </svg>
        </RaisedButton>
        <div className={`flex-1 ${raised}`} />
        <RaisedButton label="向右" className="w-[26px]">
          <svg className="h-3 w-2" viewBox="0 0 8 12">
            <path d="M.5 .5v11L7.500 6z" />
          </svg>
        </RaisedButton>
      </div>
      <div className="flex flex-1 items-center pl-1">
        <div className="flex h-9 w-[161px] shrink-0 items-center border-2 border-[#a5a5a5] bg-white pl-0.5">
          <input
            aria-label="商品代碼"
            defaultValue="ES06750L5"
            className="h-7 w-[122px] bg-[#0078d7] px-px text-[21px] font-bold text-white outline-none"
          />
          <button aria-label="選擇商品代碼" className="ml-auto flex h-full w-[27px] items-center justify-center border-2 border-[#a2a2a2] bg-[#ececec]">
            <Down />
          </button>
        </div>
        <div className="ml-px flex gap-px text-lg">
          <RaisedButton className="h-9 w-[34px] text-[#1d7eb0]">證</RaisedButton>
          <RaisedButton className="h-9 w-[34px] text-[#f08a1c]">期</RaisedButton>
          <RaisedButton className="h-9 w-[34px] text-[#e53b3b]">選</RaisedButton>
        </div>
        <div className="flex h-full flex-1 justify-center border-t-2 border-r-2 border-l border-[#b5b5b5] font-['Liberation_Serif','Noto_Sans_CJK_TC',serif] text-[22px] leading-7 font-bold whitespace-nowrap text-[#10106e]">
          小SP季選2512C
        </div>
        <div className="ml-1 flex gap-1 pr-[3px]">
          {drawTools.map((d) => (
            <RaisedButton key={d.t} className={`h-9 w-[34px] text-[20px] ${d.c}`}>
              {d.t}
            </RaisedButton>
          ))}
        </div>
      </div>
    </section>
  );
}

function TradePane() {
  const [checked, setChecked] = useState(true);
  const line = "border border-[#555]";
  return (
    <section className="flex min-w-0 flex-col bg-black">
      <h2 className="flex h-[31px] items-center justify-center font-['DejaVu_Sans','Noto_Sans_CJK_TC',sans-serif] text-[30px] leading-7 font-bold whitespace-nowrap text-[#18f0f4]">
        ES06750L5&nbsp;<span className="font-normal">小</span>SP<span className="font-normal">季選</span>2512C
      </h2>
      <div className="flex h-[312px] border-t-2 border-b-2 border-[#555]">
        <div className="flex-1 pr-[3px]">
          <table className="w-full table-fixed border-collapse font-['Liberation_Sans','Noto_Sans_CJK_TC',sans-serif] text-[29px] leading-7 text-[#f3f33c]">
            <thead>
              <tr className="h-[33px] bg-[#4f4f4f] text-[28px] text-[#d5d5d5]">
                <th className={`${line} pt-1 font-normal`}>時間</th>
                <th className={`${line} pt-1 font-normal`}>成交</th>
                <th className={`${line} pt-1 font-normal`}>量</th>
              </tr>
            </thead>
            <tbody>
              {trades.map((t, i) => (
                <tr key={i} className="h-[33px] align-top">
                  <td className={line}>{t.time}</td>
                  <td className={`${line} text-right ${t.up ? "text-[#e01c1c]" : "text-[#2ae02a]"}`}>{t.price}</td>
                  <td className={`${line} text-right`}>{t.qty}</td>
                </tr>
              ))}
            </tbody>
          </table>
        </div>
        <div className="flex w-[26px] items-end justify-center bg-[#efefef] pb-[27px]">
          <span className="h-[26px] w-[3px] bg-[#8a8a8a]" />
        </div>
      </div>
      <div className="flex">
        <table className="flex-1 table-fixed border-collapse font-['Liberation_Sans','Noto_Sans_CJK_TC',sans-serif] text-[19px] leading-[22px] font-bold">
          <tbody>
            <tr className="h-[25px]">
              <td className={`${line} w-[132px] text-[#e01c1c]`}>150.50</td>
              <td className={`${line} w-[132px] text-[#e01c1c]`}>47</td>
              <td className={`${line} w-[132px] text-[#e01c1c]`}>151.75</td>
              <td className={`${line} w-[132px] text-[#2ae02a]`}>16</td>
            </tr>
            <tr className="h-6">
              <td className={`${line} text-[22px] text-[#18f0f4]`}>外/內</td>
              <td className={line} />
              <td className={line} />
              <td className={line} />
            </tr>
          </tbody>
        </table>
        <div className="flex w-[26px] flex-col items-center gap-1 pt-1">
          <label className="relative block h-5 w-5">
            <input
              type="checkbox"
              aria-label="顯示內外盤"
              checked={checked}
              onChange={() => setChecked(!checked)}
              className="block h-5 w-5 appearance-none border-2 border-t-[#777] border-l-[#777] border-r-[#ddd] border-b-[#ddd] bg-white"
            />
            {checked && (
              <svg className="pointer-events-none absolute inset-1 h-3 w-3" viewBox="0 0 12 12">
                <path d="M1 5l4 5 6-9" fill="none" stroke="#000" strokeWidth="2.600" />
              </svg>
            )}
          </label>
          <RaisedButton className="h-5 w-5 text-lg leading-4 text-black">-</RaisedButton>
        </div>
      </div>
    </section>
  );
}

function DepthPane() {
  const line = "border border-[#4c4c4c] px-[3px]";
  return (
    <section className="min-w-0 border-x-2 border-[#6a6a6a] bg-black">
      <table className="h-[274px] w-full table-fixed border-collapse font-['Liberation_Sans','Noto_Sans_CJK_TC',sans-serif] text-base leading-[17px]">
        <thead>
          <tr className="bg-[#4f4f4f] text-lg leading-[17px] text-white">
            <th className={`${line} pt-px font-normal`}>張數</th>
            <th className={`${line} pt-px font-normal`}>賣價</th>
          </tr>
        </thead>
        <tbody className="text-right">
          {asks.map(([qty, price]) => (
            <tr key={qty} className="h-[19px]">
              <td className={`${line} text-[#2ae02a]`}>{qty}</td>
              <td className={`${line} text-[#c01515]`}>{price}</td>
            </tr>
          ))}
          <tr className="bg-[#4f4f4f] text-center text-lg leading-[17px] text-white">
            <td className={line}>買價</td>
            <td className={line}>張數</td>
          </tr>
          {bids.map(([price, qty]) => (
            <tr key={price} className="h-[19px] text-[#c01515]">
              <td className={line}>{price}</td>
              <td className={line}>{qty}</td>
            </tr>
          ))}
        </tbody>
      </table>
    </section>
  );
}

function ReportPane() {
  return (
    <section className="flex min-w-0 flex-col pr-1">
      <div className="flex flex-1 flex-col border-2 border-t-[3px] border-t-[#808080] border-r-[#dcdcdc] border-b-[#dcdcdc] border-l-[#808080] bg-white">
        <table className="w-full table-fixed border-collapse">
          <thead>
            <tr className="h-[25px] bg-[#efefef] text-left text-[19px] leading-[22px] text-[#222]">
              {["時間", "市場別", "委託別", "買賣別", "書號"].map((h) => (
                <th key={h} className="w-24 border-l-2 border-[#bdbdbd] pt-[3px] pl-0.5 font-normal last:w-auto">
                  {h}
                </th>
              ))}
            </tr>
          </thead>
        </table>
        <svg className="block h-[272px] w-full" viewBox="0 0 470 272" preserveAspectRatio="none" shapeRendering="crispEdges">
          {pinkBands.map(([row, n]) => (
            <rect key={row} x="0" y={row * 8} width="470" height={n * 8} fill="#eab7c1" />
          ))}
          {paleBands.map(([row, fill]) => (
            <rect key={row} x="0" y={row * 8} width="463" height="8" fill={fill} />
          ))}
          {mosaic.map((m) =>
            m.cells.split("").map((ch, i) =>
              Number(ch) > 0 ? (
                <rect key={`${m.row}-${i}`} x={2 + i * 8} y={m.row * 8} width="8" height="8" fill={m.shades[Number(ch) - 1]} />
              ) : null
            )
          )}
        </svg>
        <div className="flex-1" />
        <div className="flex h-6 items-center bg-[#efefef] pl-[26px]">
          <span className="h-[3px] w-[26px] bg-[#8a8a8a]" />
        </div>
      </div>
      <p className="flex h-[34px] items-center pl-1 text-lg text-[#222]">主動回報已完成</p>
    </section>
  );
}

export default function App() {
  return (
    <div className="flex min-h-screen w-full flex-col overflow-hidden bg-[#efefef] font-['Noto_Sans','Noto_Sans_CJK_TC',sans-serif]">
      <TitleBar />
      <MenuBar />
      <Toolbars />
      <OrderPanel />
      <ProductBar />
      <QuoteGrid />
      <main className="mt-[15px] grid flex-1 grid-cols-[716fr_565fr_154fr_485fr] pl-px">
        <ChartPane />
        <div className="grid pl-[7px]">
          <TradePane />
        </div>
        <DepthPane />
        <div className="grid pl-[7px]">
          <ReportPane />
        </div>
      </main>
    </div>
  );
}
